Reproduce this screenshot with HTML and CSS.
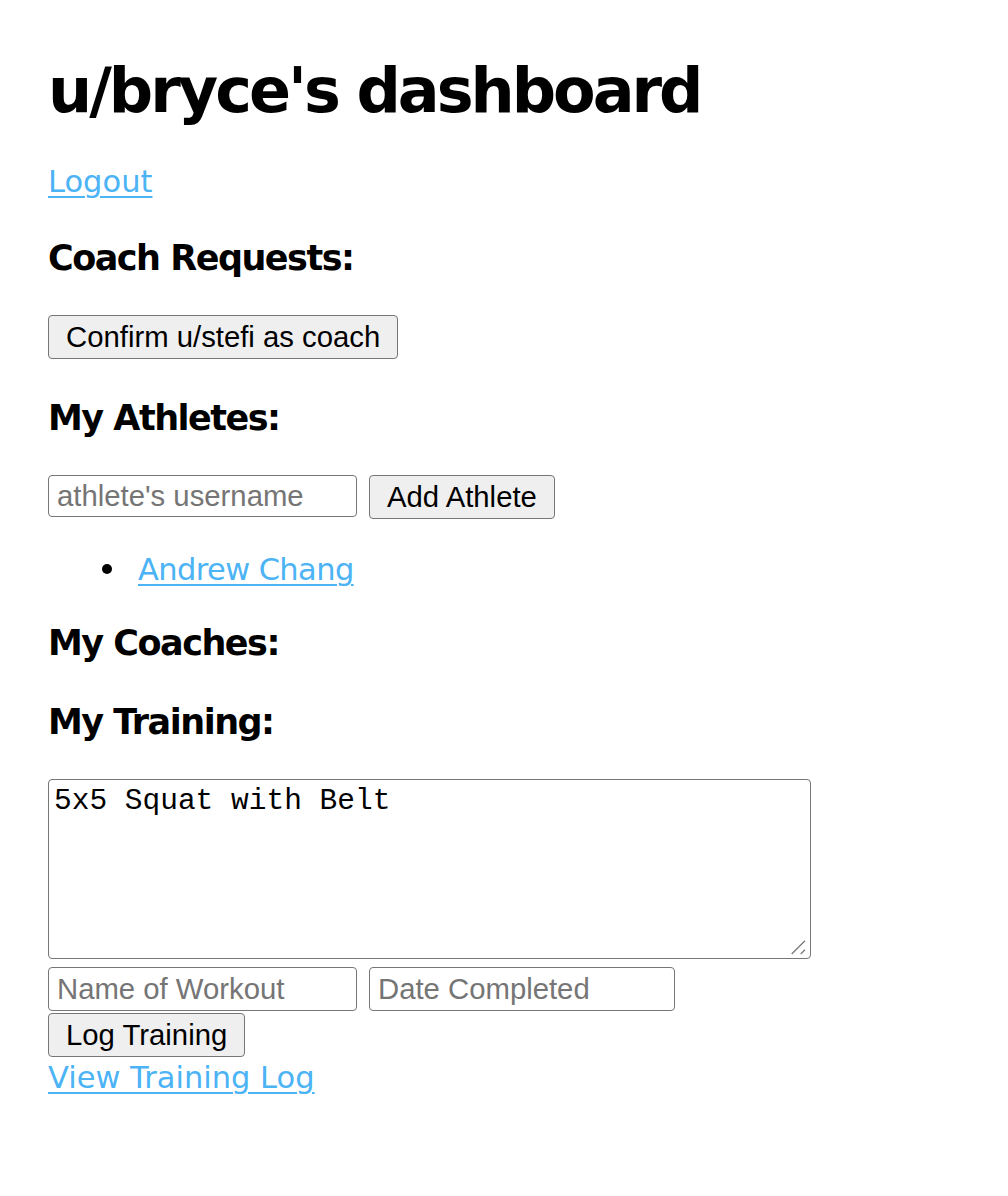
FILE: index.html
```html
<!DOCTYPE html>
<html>
<head>
<meta charset="utf-8">
<title>u/bryce's dashboard</title>
<link rel="stylesheet" href="styles.css">
</head>
<body>
<main class="page">
  <h1 class="title">u/bryce's dashboard</h1>
  <div class="line line-logout"><a class="link" href="#">Logout</a></div>

  <h3 class="section">Coach Requests:</h3>
  <div class="row"><button class="btn">Confirm u/stefi as coach</button></div>

  <h3 class="section">My Athletes:</h3>
  <div class="row row-athlete">
    <input class="field field-a" type="text" placeholder="athlete's username">
    <button class="btn">Add Athlete</button>
  </div>
  <ul class="athletes">
    <li class="line athlete"><a class="link" href="#">Andrew Chang</a></li>
  </ul>

  <h3 class="section section-coaches">My Coaches:</h3>

  <h3 class="section">My Training:</h3>
  <div class="ta-wrap">
    <textarea class="ta">5x5 Squat with Belt</textarea>
    <svg class="grip" width="16" height="16" viewBox="0 0 16 16"><path d="M1.7 15 L15 1.7 M10.7 15 L15 10.7" stroke="#7a7a7a" stroke-width="1.3" fill="none"/></svg>
  </div>
  <div class="row row-log">
    <input class="field field-b" type="text" placeholder="Name of Workout">
    <input class="field field-c" type="text" placeholder="Date Completed">
  </div>
  <div class="row row-btn"><button class="btn">Log Training</button></div>
  <div class="line line-view"><a class="link" href="#">View Training Log</a></div>
</main>
</body>
</html>
```
FILE: styles.css
```css
html, body {
  margin: 0;
  padding: 0;
  background: #ffffff;
}
body {
  font-family: "DejaVu Sans", "Liberation Sans", sans-serif;
  color: #000;
}
.page {
  padding: 55px 48px 40px 48px;
}
.title {
  margin: 0;
  font-size: 62px;
  line-height: 72px;
  font-weight: bold;
  letter-spacing: -3px;
}
.line {
  font-size: 30.5px;
  line-height: 34px;
}
.line-logout {
  margin-top: 38px;
}
.link {
  color: #4cb3f5;
  text-decoration: underline;
  text-decoration-thickness: 2px;
  text-underline-offset: 4px;
}
.section {
  margin: 39px 0 0 0;
  font-size: 35px;
  line-height: 40px;
  font-weight: bold;
  letter-spacing: -1.5px;
}
.section-coaches {
  margin-top: 36px;
}
.row {
  display: flex;
  align-items: flex-start;
  gap: 12px;
  margin-top: 37px;
}
.btn {
  font-family: "Liberation Sans", Arial, sans-serif;
  font-size: 29.3px;
  line-height: 34px;
  padding: 4px 17px;
  margin: 0;
  border: 1px solid #767676;
  border-radius: 4px;
  background: #efefef;
  color: #000;
}
.field {
  box-sizing: border-box;
  font-family: "Liberation Sans", Arial, sans-serif;
  font-size: 29.3px;
  height: 42px;
  padding: 0 8px;
  margin: 0;
  border: 1px solid #767676;
  border-radius: 4px;
  background: #fff;
  color: #000;
}
.field::placeholder {
  color: #757575;
}
.field-a { width: 309px; }
.field-b { width: 309px; }
.field-c { width: 306px; }
.athletes {
  margin: 34px 0 0 0;
  padding-left: 90px;
  list-style: none;
}
.athlete {
  position: relative;
  letter-spacing: -0.6px;
}
.athlete::before {
  content: "";
  position: absolute;
  left: -36px;
  top: 11px;
  width: 10px;
  height: 10px;
  border-radius: 50%;
  background: #000;
}
.ta-wrap {
  position: relative;
  width: 763px;
  height: 180px;
  margin-top: 37px;
}
.ta {
  display: block;
  box-sizing: border-box;
  width: 763px;
  height: 180px;
  margin: 0;
  padding: 5px 5px;
  font-family: "Liberation Mono", "Courier New", monospace;
  font-size: 29.5px;
  line-height: 33px;
  border: 1px solid #767676;
  border-radius: 4px;
  resize: none;
  background: #fff;
  color: #000;
}
.grip {
  position: absolute;
  right: 5px;
  bottom: 4px;
}
.row-log {
  margin-top: 8px;
}
.row-log .field {
  height: 44px;
}
.row-btn {
  margin-top: 2px;
}
.line-view {
  margin-top: 4px;
}
```
